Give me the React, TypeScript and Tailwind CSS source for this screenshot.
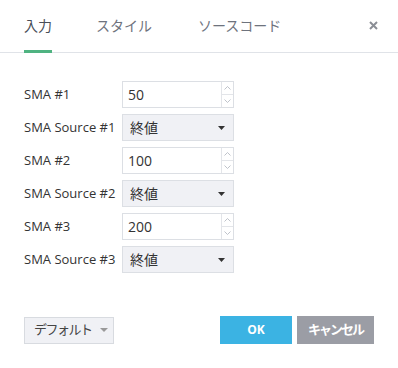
import React, { useState } from 'react';

const FONT = "font-['Open_Sans','Noto_Sans_CJK_JP',sans-serif]";

const Caret: React.FC<{ color?: string; w?: number }> = ({ color = '#333', w = 7 }) => (
  <svg width={w} height={Math.round(w / 2)} viewBox="0 0 8 4" className="shrink-0" preserveAspectRatio="none">
    <path d="M0 0 L8 0 L4 4 Z" fill={color} />
  </svg>
);

const Spinner: React.FC = () => (
  <div className="flex flex-col w-[12px] border-l border-[#e3e5e9] self-stretch">
    <div className="flex-1 flex items-center justify-center border-b border-[#e3e5e9]">
      <svg width="7" height="4" viewBox="0 0 7 4">
        <path d="M0.5 3.5 L3.5 0.5 L6.5 3.5" fill="none" stroke="#b8bcc4" strokeWidth="0.9" />
      </svg>
    </div>
    <div className="flex-1 flex items-center justify-center">
      <svg width="7" height="4" viewBox="0 0 7 4">
        <path d="M0.5 0.5 L3.5 3.5 L6.5 0.5" fill="none" stroke="#b8bcc4" strokeWidth="0.9" />
      </svg>
    </div>
  </div>
);

const NumberField: React.FC<{ value: string }> = ({ value }) => (
  <div className="flex w-[112px] h-[27px] border border-[#dcdfe4] bg-white">
    <div className="flex-1 flex items-center pl-[5px] text-[14px] text-[#333]">{value}</div>
    <Spinner />
  </div>
);

const SelectField: React.FC<{ value: string }> = ({ value }) => (
  <div className="flex items-center justify-between w-[112px] h-[27px] border border-[#dcdfe4] bg-[#f0f1f5] pl-[7px] pr-[8px]">
    <span className="text-[14px] text-[#333]">{value}</span>
    <Caret />
  </div>
);

export default function App() {
  const [tab] = useState(0);
  const tabs = ['入力', 'スタイル', 'ソースコード'];
  const rows: { label: string; kind: 'num' | 'sel'; value: string }[] = [
    { label: 'SMA #1', kind: 'num', value: '50' },
    { label: 'SMA Source #1', kind: 'sel', value: '終値' },
    { label: 'SMA #2', kind: 'num', value: '100' },
    { label: 'SMA Source #2', kind: 'sel', value: '終値' },
    { label: 'SMA #3', kind: 'num', value: '200' },
    { label: 'SMA Source #3', kind: 'sel', value: '終値' },
  ];

  return (
    <div className={`w-[398px] h-[368px] bg-white flex flex-col ${FONT}`}>
      {/* Tabs */}
      <div className="flex items-stretch h-[53px] border-b border-[#e0e3e8] pl-6 pr-[20px]">
        {tabs.map((t, i) => (
          <div
            key={t}
            className={`relative flex items-center text-[14px] pb-[1px] ${i === 1 ? 'ml-[44px]' : ''} ${i === 2 ? 'ml-[46px]' : ''} ${tab === i ? 'text-[#4a4f59]' : 'text-[#6e737d]'}`}
          >
            {t}
            {tab === i && <div className="absolute left-0 right-0 bottom-[-1px] h-[3px] bg-[#4fb381]" />}
          </div>
        ))}
        <div className="ml-auto flex items-center pb-[2px]">
          <svg width="9" height="9" viewBox="0 0 9 9">
            <path d="M1 1 L8 8 M8 1 L1 8" stroke="#8b8e95" strokeWidth="2" />
          </svg>
        </div>
      </div>

      {/* Form */}
      <div className="flex flex-col gap-[6px] pt-[28px] pl-6">
        {rows.map(r => (
          <div key={r.label} className="flex items-center">
            <div className="w-[98px] text-[13px] text-[#333] whitespace-nowrap">{r.label}</div>
            {r.kind === 'num' ? <NumberField value={r.value} /> : <SelectField value={r.value} />}
          </div>
        ))}
      </div>

      {/* Footer */}
      <div className="flex items-center mt-auto mb-[24px] pl-6 pr-[24px]">
        <div className="flex items-center gap-[8px] w-[90px] h-[27px] border border-[#d8dbe0] bg-[#f0f1f5] pl-[9px] text-[13px] tracking-[-1.5px] text-[#444] whitespace-nowrap">
          デフォルト
          <Caret color="#999" w={8} />
        </div>
        <div className="ml-auto flex gap-[5px]">
          <button className="w-[72px] h-[28px] bg-[#3bb3e3] text-white text-[12px] font-bold">OK</button>
          <button className="w-[77px] h-[28px] bg-[#9b9da5] text-white text-[13px] font-bold tracking-[-2px] whitespace-nowrap">キャンセル</button>
        </div>
      </div>
    </div>
  );
}
